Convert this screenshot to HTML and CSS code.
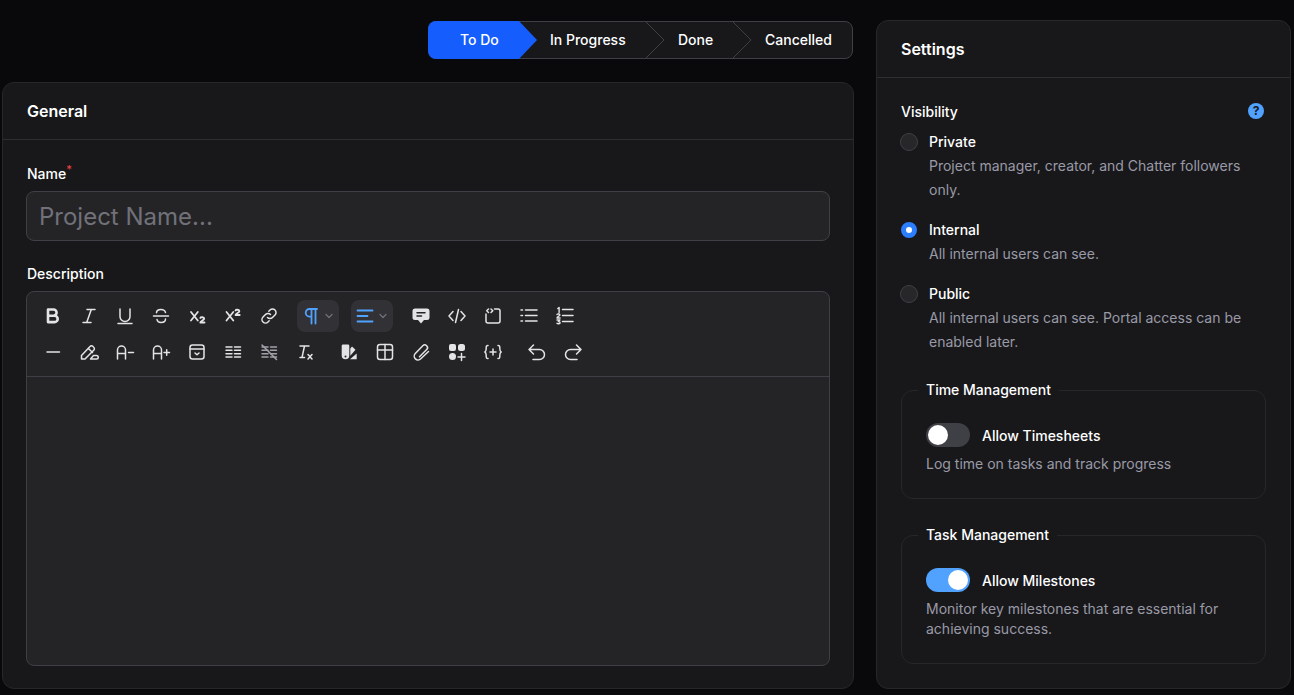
FILE: index.html
```html
<!DOCTYPE html>
<html lang="en">
<head>
    <meta charset="UTF-8">
    <title>New Project</title>
    <link rel="stylesheet" href="styles.css">
</head>
<body>
    <div class="page">
        <div class="main-col">
            <div class="stepper">
                <div class="step step-active">To Do</div>
                <div class="step step-progress">In Progress
                    <svg class="step-sep" viewBox="0 0 20 38"><path d="M0 0L19 19L0 38"/></svg>
                </div>
                <div class="step step-done">Done
                    <svg class="step-sep" viewBox="0 0 20 38"><path d="M0 0L19 19L0 38"/></svg>
                </div>
                <div class="step step-cancelled">Cancelled</div>
            </div>

            <section class="card general">
                <h2 class="card-title">General</h2>
                <div class="general-body">
                    <label class="field-label">Name<sup class="req">*</sup></label>
                    <input class="name-input" type="text" placeholder="Project Name...">
                    <label class="field-label desc-label">Description</label>
                    <div class="editor">
                        <div class="toolbar">
                            <div class="tool-row">
                                <span class="tool"><svg viewBox="0 0 20 20"><path class="thick" d="M5 3.500h5.500a3.100 3.100 0 0 1 0 6.200H5zM5 9.700h6.500a3.200 3.200 0 0 1 0 6.400H5z"/></svg></span>
                                <span class="tool"><svg viewBox="0 0 20 20"><path d="M8 3.500h8M4 16.500h8M12.300 3.500L7.700 16.500"/></svg></span>
                                <span class="tool"><svg viewBox="0 0 20 20"><path d="M5 3v7.500a5 5 0 0 0 10 0V3M3 17.500h14"/></svg></span>
                                <span class="tool"><svg viewBox="0 0 20 20"><path d="M2.500 10h15M14.500 6.500C14 4.500 12 3.500 10 3.500c-2.500 0-4.500 1.300-4.500 3.300M6 13.500c.3 2 2 3 4 3 2.500 0 4.500-1.300 4.500-3.500"/></svg></span>
                                <span class="tool"><svg viewBox="0 0 20 20"><path class="bold" d="M4 6l6.800 8.500M10.800 6L4 14.500"/><path class="bold" d="M13.300 12c.3-1 3.900-1.200 3.900.7 0 1.500-3.900 2-3.900 3.800h4.200"/></svg></span>
                                <span class="tool"><svg viewBox="0 0 20 20"><path class="bold" d="M3.500 6l6.800 8.500M10.300 6L3.500 14.500"/><path class="bold" d="M12.500 4.500c.3-1 3.900-1.200 3.900.7 0 1.500-3.900 2-3.900 3.800h4.200"/></svg></span>
                                <span class="tool"><svg viewBox="0 0 20 20"><path d="M8.500 11.500a3.500 3.500 0 0 0 5 0l2.500-2.500a3.500 3.500 0 0 0-5-5l-1.200 1.200M11.500 8.500a3.500 3.500 0 0 0-5 0L4 11a3.500 3.500 0 0 0 5 5l1.200-1.200"/></svg></span>
                                <span class="tool-drop drop-first">
                                    <svg class="blue-icon" viewBox="0 0 20 20"><path d="M16 3H8.500a3.800 3.800 0 0 0 0 7.600H10.500M10.500 3v14.500M14.500 3v14.500"/></svg>
                                    <svg class="chev" viewBox="0 0 10 10"><path d="M2 3.500l3 3 3-3"/></svg>
                                </span>
                                <span class="tool-drop drop-second">
                                    <svg class="blue-icon" viewBox="0 0 20 20"><path d="M2.500 4.500h15M2.500 10h10M2.500 15.500h15"/></svg>
                                    <svg class="chev" viewBox="0 0 10 10"><path d="M2 3.500l3 3 3-3"/></svg>
                                </span>
                                <span class="tool"><svg viewBox="0 0 20 20"><path class="solid" d="M4 2.500h12a2.500 2.500 0 0 1 2.500 2.500v6.500A2.500 2.500 0 0 1 16 14h-3l-3 3.500L7 14H4a2.500 2.500 0 0 1-2.500-2.500V5A2.500 2.500 0 0 1 4 2.500z"/><path class="cut" d="M6 6.800h8M6 10h4.500"/></svg></span>
                                <span class="tool"><svg viewBox="0 0 20 20"><path d="M6 5.500L2 10l4 4.500M14 5.500l4 4.500-4 4.500M11.500 3.500l-3 13"/></svg></span>
                                <span class="tool"><svg viewBox="0 0 20 20"><path d="M3 8v7a2 2 0 0 0 2 2h10a2 2 0 0 0 2-2V5a2 2 0 0 0-2-2h-3.500M5.500 3L3.700 4.800l1.800 1.700M8 3l1.800 1.800L8 6.500"/></svg></span>
                                <span class="tool"><svg viewBox="0 0 20 20"><path d="M6.500 4h11.500M6.500 9.500h11.500M6.500 15h11.500M2 4h1.500M2 9.500h1.500M2 15h1.500"/></svg></span>
                                <span class="tool"><svg viewBox="0 0 20 20"><path d="M7.500 3.500h10.500M7.500 9.500h10.500M7.500 15.500h10.500"/><path class="mid" d="M2.800 2.500l1.300-1v5M2 8.500c.4-.8 2.900-.8 2.900.5 0 1-2.900 1.500-2.900 3h3.100M2 14h2.900l-1.500 1.600c1.100 0 1.700.5 1.700 1.200 0 1.200-2.400 1.300-3.100.5"/></svg></span>
                            </div>
                            <div class="tool-row">
                                <span class="tool"><svg viewBox="0 0 20 20"><path d="M4 10h12.500"/></svg></span>
                                <span class="tool"><svg viewBox="0 0 20 20"><path d="M2.500 13.500L11 4.500a2 2 0 0 1 3 0l.7.7a2 2 0 0 1 0 3L6 17H2.500zM9.500 6.500l4 4M11.500 17h6a1.200 1.200 0 0 0 0-3.500h-3z"/></svg></span>
                                <span class="tool"><svg viewBox="0 0 20 20"><path d="M2.500 17V8a4 4 0 0 1 8 0v9M2.500 11.500h8M13.500 10.500h5"/></svg></span>
                                <span class="tool"><svg viewBox="0 0 20 20"><path d="M2.500 17V8a4 4 0 0 1 8 0v9M2.500 11.500h8M13 10.500h5.500M15.700 7.800v5.400"/></svg></span>
                                <span class="tool"><svg viewBox="0 0 20 20"><rect x="3" y="3" width="14" height="14" rx="2.500"/><path d="M3 7h14M8 11l2 1.800 2-1.800"/></svg></span>
                                <span class="tool"><svg viewBox="0 0 20 20"><path d="M3 5h6M3 8.300h6M3 11.700h6M3 15h6M11.500 5h6M11.500 8.300h6M11.500 11.700h6M11.500 15h6"/></svg></span>
                                <span class="tool tool-dim"><svg viewBox="0 0 20 20"><path d="M3 5h6M3 8.300h6M3 11.700h6M3 15h6M11.500 5h6M11.500 8.300h6M11.500 11.700h6M11.500 15h6"/><path d="M3 3l14.500 14.500"/></svg></span>
                                <span class="tool"><svg viewBox="0 0 20 20"><path d="M5 4h9M9.500 4L7 15.500M5 15.500h4.500M13 12.500l4 4.500M17 12.500l-4 4.500"/></svg></span>
                                <span class="tool tool-gap"><svg viewBox="0 0 20 20"><path class="solid" d="M4 2.500h5a1.300 1.300 0 0 1 1.300 1.300v9.700a3.800 3.800 0 0 1-7.600 0V3.800A1.300 1.300 0 0 1 4 2.500zM11.300 6.500L13 4.500l3.500 3.300-5.200 6zM17.700 11.500v5.800h-6.700z"/><circle class="dot" cx="6.500" cy="14.500" r="1"/></svg></span>
                                <span class="tool"><svg viewBox="0 0 20 20"><rect x="2.500" y="2.500" width="15" height="15" rx="2.500"/><path d="M2.500 8h15M10 2.500v15"/></svg></span>
                                <span class="tool"><svg viewBox="0 0 20 20"><path d="M17.500 9.500l-7.700 7.300a3.800 3.800 0 0 1-5.500-5.300L11.800 3.800a2.700 2.700 0 0 1 3.900 3.800l-7.200 7.200"/></svg></span>
                                <span class="tool"><svg viewBox="0 0 20 20"><rect class="solid" x="2" y="2" width="7" height="7" rx="2"/><rect class="solid" x="11" y="2" width="7" height="7" rx="2.500"/><circle class="solid" cx="5.500" cy="14.500" r="3.500"/><path d="M14.500 11.500v7M11 15h7"/></svg></span>
                                <span class="tool"><svg viewBox="0 0 20 20"><path d="M5 3.500c-2 0-1.800 1.500-1.800 3S3 9.500 1.800 10c1.200.5 1.400 2 1.400 3.500s-.2 3 1.800 3M15 3.500c2 0 1.800 1.500 1.800 3s.2 3 1.400 3.500c-1.200.5-1.400 2-1.400 3.500s.2 3-1.800 3M10 7v6M7 10h6"/></svg></span>
                                <span class="tool tool-gap"><svg viewBox="0 0 20 20"><path d="M6.500 3L2 7.500 6.500 12M2 7.500h10.500a5 5 0 0 1 0 10H6"/></svg></span>
                                <span class="tool"><svg viewBox="0 0 20 20"><path d="M13.500 3L18 7.500 13.500 12M18 7.500H7.500a5 5 0 0 0 0 10H14"/></svg></span>
                            </div>
                        </div>
                    </div>
                </div>
            </section>
        </div>

        <aside class="card settings">
            <h2 class="card-title settings-title">Settings</h2>
            <div class="settings-body">
                <div class="vis-head">
                    <span>Visibility</span>
                    <span class="help">?</span>
                </div>
                <div class="radio-item">
                    <span class="radio"></span>
                    <div>
                        <div class="radio-name">Private</div>
                        <div class="hint">Project manager, creator, and Chatter followers only.</div>
                    </div>
                </div>
                <div class="radio-item">
                    <span class="radio radio-on"></span>
                    <div>
                        <div class="radio-name">Internal</div>
                        <div class="hint">All internal users can see.</div>
                    </div>
                </div>
                <div class="radio-item">
                    <span class="radio"></span>
                    <div>
                        <div class="radio-name">Public</div>
                        <div class="hint">All internal users can see. Portal access can be enabled later.</div>
                    </div>
                </div>

                <fieldset class="group group-time">
                    <legend>Time Management</legend>
                    <div class="toggle-row">
                        <span class="toggle"></span>
                        <span class="toggle-label">Allow Timesheets</span>
                    </div>
                    <div class="group-hint">Log time on tasks and track progress</div>
                </fieldset>

                <fieldset class="group group-task">
                    <legend>Task Management</legend>
                    <div class="toggle-row">
                        <span class="toggle toggle-on"></span>
                        <span class="toggle-label">Allow Milestones</span>
                    </div>
                    <div class="group-hint">Monitor key milestones that are essential for achieving success.</div>
                </fieldset>
            </div>
        </aside>
    </div>
</body>
</html>
```

FILE: styles.css
```css
* {
    box-sizing: border-box;
}
html, body {
    height: 100%;
}
body {
    margin: 0;
    background-color: #09090b;
    color: #fff;
    font-family: Inter, "Liberation Sans", sans-serif;
    overflow: hidden;
}
.page {
    display: grid;
    grid-template-columns: 852px 415px;
    column-gap: 22px;
    height: 689px;
    margin-left: 2px;
    padding-top: 20px;
}
.main-col {
    display: flex;
    flex-direction: column;
    align-items: flex-end;
    min-height: 0;
}
.card {
    background-color: #18181b;
    border: 1px solid #27272a;
    border-radius: 12px;
}
.card-title {
    margin: 0;
    height: 57px;
    padding: 0 24px;
    font-size: 16px;
    line-height: 56px;
    font-weight: 600;
    border-bottom: 1px solid #2e2e32;
}

/* status stepper */
.stepper {
    display: flex;
    width: 425px;
    height: 38px;
    margin-top: 1px;
    margin-right: 1px;
    background-color: #18181b;
    border: 1px solid #3f3f46;
    border-radius: 8px;
    font-size: 14px;
    font-weight: 500;
}
.step {
    position: relative;
    display: flex;
    flex: none;
    align-items: center;
    height: 36px;
    padding-bottom: 2px;
}
.step-active {
    width: 109px;
    margin: -1px -18px -1px -1px;
    height: 38px;
    padding-left: 32px;
    background-color: #155dfc;
    border-radius: 8px 0 0 8px;
    clip-path: polygon(0 0, 91px 0, 109px 19px, 91px 38px, 0 38px);
    z-index: 1;
}
.step-progress {
    width: 127px;
    padding-left: 31px;
}
.step-done {
    width: 87px;
    padding-left: 32px;
}
.step-cancelled {
    flex: 1;
    padding-left: 32px;
}
.step-sep {
    position: absolute;
    top: -1px;
    right: -19px;
    width: 20px;
    height: 38px;
    fill: none;
    stroke: #3f3f46;
    stroke-width: 1;
}

/* general card */
.general {
    width: 100%;
    flex: 1;
    margin-top: 23px;
    min-height: 0;
}
.general-body {
    padding: 24px 23px 0;
}
.field-label {
    display: block;
    height: 20px;
    margin-left: 1px;
    font-size: 14px;
    line-height: 20px;
    font-weight: 500;
}
.req {
    color: #ef4444;
    font-size: 11px;
    line-height: 0;
    vertical-align: 6px;
}
.name-input {
    display: block;
    width: 100%;
    height: 50px;
    margin-top: 7px;
    padding: 0 12px;
    background-color: #242427;
    border: 1px solid #3f3f46;
    border-radius: 8px;
    color: #fff;
    font-family: inherit;
    font-size: 24px;
}
.name-input::placeholder {
    color: #71717a;
}
.desc-label {
    margin-top: 23px;
}
.editor {
    height: 375px;
    margin-top: 7px;
    background-color: #242427;
    border: 1px solid #3f3f46;
    border-radius: 8px;
}
.toolbar {
    height: 85px;
    padding: 6px 8px 0;
    border-bottom: 1px solid #3f3f46;
}
.tool-row {
    display: flex;
    height: 36px;
    align-items: center;
}
.tool {
    display: flex;
    align-items: center;
    justify-content: center;
    width: 36px;
    height: 36px;
    flex: none;
}
.tool svg, .tool-drop svg {
    width: 20px;
    height: 20px;
    fill: none;
    stroke: #e4e4e7;
    stroke-width: 1.5;
    stroke-linecap: round;
    stroke-linejoin: round;
}
.tool-dim svg {
    stroke: #a1a1aa;
}
.tool-gap {
    margin-left: 8px;
}
.tool svg .thick {
    stroke-width: 2.6;
}
.tool svg .bold {
    stroke-width: 1.8;
}
.tool svg .mid {
    stroke-width: 1.4;
}
.tool svg .solid {
    fill: #e4e4e7;
    stroke: none;
}
.tool svg .dot {
    fill: #242427;
    stroke: none;
}
.tool svg .cut {
    stroke: #242427;
}
.tool-drop {
    display: flex;
    align-items: center;
    width: 42px;
    height: 32px;
    flex: none;
    padding-left: 4px;
    background-color: #323236;
    border-radius: 8px;
}
.drop-first {
    margin-left: 10px;
}
.drop-second {
    margin: 0 10px 0 12px;
}
.tool-drop .blue-icon {
    stroke: #51a2ff;
    stroke-width: 1.8;
}
.tool-drop .chev {
    width: 10px;
    height: 10px;
    margin-left: 3px;
    stroke: #71717a;
    stroke-width: 1.2;
}

/* settings card */
.settings {
    display: flex;
    flex-direction: column;
    min-height: 0;
}
.settings-body {
    padding: 23px 24px 0;
}
.vis-head {
    display: flex;
    justify-content: space-between;
    align-items: center;
    height: 20px;
    font-size: 14px;
    font-weight: 500;
}
.help {
    width: 16px;
    height: 16px;
    margin-right: 2px;
    border-radius: 50%;
    background-color: #51a2ff;
    color: #18181b;
    font-size: 12px;
    font-weight: 700;
    line-height: 16px;
    text-align: center;
}
.radio-item {
    display: flex;
    gap: 11px;
    margin-top: 11px;
    margin-bottom: 18px;
}
.radio-item:last-of-type {
    margin-bottom: 0;
}
.radio {
    flex: none;
    width: 18px;
    height: 18px;
    margin-top: 1px;
    margin-left: -1px;
    border: 1px solid #3f3f46;
    border-radius: 50%;
    background-color: #27272a;
}
.radio-on {
    width: 16px;
    height: 16px;
    margin: 2px 1px 0 0;
    border: 5px solid #2b7fff;
    background-color: #fff;
}
.radio-name {
    font-size: 14px;
    line-height: 20px;
    font-weight: 500;
}
.hint {
    margin-top: 2px;
    font-size: 14px;
    line-height: 24px;
    color: #9a9aa6;
}
.group {
    margin: 0;
    padding: 0 24px;
    border: 1px solid #27272a;
    border-radius: 12px;
    min-width: 0;
}
.group legend {
    padding: 0 8px;
    margin-left: -8px;
    font-size: 14px;
    line-height: 20px;
    font-weight: 500;
}
.group-time {
    height: 119px;
    margin-top: 26px;
    padding-top: 23px;
}
.group-task {
    height: 139px;
    margin-top: 26px;
    padding-top: 23px;
}
.toggle-row {
    display: flex;
    align-items: center;
    gap: 12px;
}
.toggle {
    position: relative;
    width: 44px;
    height: 24px;
    border-radius: 12px;
    background-color: #3f3f46;
}
.toggle::after {
    content: "";
    position: absolute;
    top: 2px;
    left: 2px;
    width: 20px;
    height: 20px;
    border-radius: 50%;
    background-color: #fff;
}
.toggle-on {
    background-color: #51a2ff;
}
.toggle-on::after {
    left: 22px;
}
.toggle-label {
    font-size: 14px;
    font-weight: 500;
}
.group-hint {
    margin-top: 7px;
    font-size: 14px;
    line-height: 20px;
    color: #9a9aa6;
}
```
